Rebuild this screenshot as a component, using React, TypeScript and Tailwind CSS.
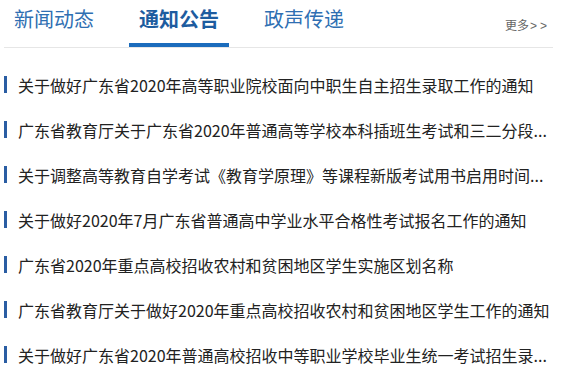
const tabs = [
  { label: "新闻动态", active: false },
  { label: "通知公告", active: true },
  { label: "政声传递", active: false },
]

const notices = [
  "关于做好广东省2020年高等职业院校面向中职生自主招生录取工作的通知",
  "广东省教育厅关于广东省2020年普通高等学校本科插班生考试和三二分段...",
  "关于调整高等教育自学考试《教育学原理》等课程新版考试用书启用时间...",
  "关于做好2020年7月广东省普通高中学业水平合格性考试报名工作的通知",
  "广东省2020年重点高校招收农村和贫困地区学生实施区划名称",
  "广东省教育厅关于做好2020年重点高校招收农村和贫困地区学生工作的通知",
  "关于做好广东省2020年普通高校招收中等职业学校毕业生统一考试招生录...",
]

export default function App() {
  return (
    <div
      className="w-[573px] h-[368px] overflow-hidden bg-white pl-[4px]"
      style={{ fontFamily: '"Microsoft YaHei", "Noto Sans CJK SC", "Noto Sans", sans-serif' }}
    >
      {/* Tab header */}
      <div className="flex w-[549px] h-[48px] border-b border-[#e6e6e6]">
        <div className="flex gap-[25px]">
          {tabs.map((tab) => (
            <div
              key={tab.label}
              className={
                tab.active
                  ? "w-[100px] h-[47px] border-b-4 border-[#1b6cbc] text-center text-[20px] leading-[28px] pt-[5px] font-bold text-[#1d5c9f]"
                  : "w-[100px] h-[47px] text-center text-[20px] leading-[28px] pt-[5px] text-[#2f6fb2]"
              }
            >
              {tab.label}
            </div>
          ))}
        </div>
        <a className="ml-auto pr-[3px] pt-[17px] text-[12px] leading-[16px] text-[#666666]">
          更多<span className="ml-[1px] tracking-[3px]" style={{ fontFamily: '"Liberation Sans", sans-serif' }}>&gt;&gt;</span>
        </a>
      </div>

      {/* Notice list */}
      <ul className="mt-[14px]">
        {notices.map((title) => (
          <li key={title} className="flex items-center h-[45px]">
            <span className="w-[3px] h-[17px] bg-[#2a5da3] mr-[11px] shrink-0" />
            <span className="whitespace-nowrap text-[16px] leading-[22px] text-[#222222]">{title}</span>
          </li>
        ))}
      </ul>
    </div>
  )
}
